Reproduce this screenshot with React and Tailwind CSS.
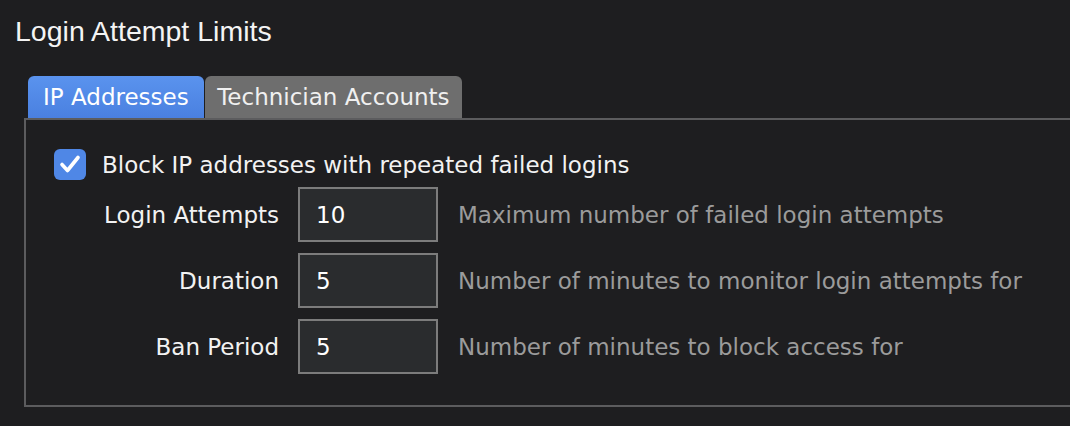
import { useState } from 'react';

const rows = [
  { label: 'Login Attempts', value: '10', hint: 'Maximum number of failed login attempts' },
  { label: 'Duration', value: '5', hint: 'Number of minutes to monitor login attempts for' },
  { label: 'Ban Period', value: '5', hint: 'Number of minutes to block access for' },
];

function App() {
  const [tab, setTab] = useState('ip');
  const [checked, setChecked] = useState(true);

  return (
    <div className="w-[1070px] h-[426px] bg-[#1e1e20] overflow-hidden text-white font-['DejaVu_Sans',sans-serif]">
      <h1 className="pt-[14px] pl-[15px] text-[28.5px] leading-[34px] font-['Liberation_Sans',sans-serif] text-[#f4f4f4]">
        Login Attempt Limits
      </h1>

      <div className="mt-[28px] ml-[24px] w-[1100px]">
        <div className="flex pl-[4px] h-[42px] items-end">
          <button
            onClick={() => setTab('ip')}
            className={`h-[42px] px-[15px] rounded-t-[6px] text-[23px] leading-[42px] ${tab === 'ip' ? 'bg-gradient-to-b from-[#5a93ee] to-[#4a80e0] text-white' : 'bg-[#6e6e6e] text-[#f0f0f0]'}`}
          >
            IP Addresses
          </button>
          <button
            onClick={() => setTab('tech')}
            className={`ml-[1px] h-[42px] px-[12.5px] rounded-t-[6px] text-[23px] leading-[42px] ${tab === 'tech' ? 'bg-gradient-to-b from-[#5a93ee] to-[#4a80e0] text-white' : 'bg-[#6e6e6e] text-[#f0f0f0]'}`}
          >
            Technician Accounts
          </button>
        </div>

        <div className="h-[289px] border-t-2 border-l-2 border-b-2 border-[#5c5c5e] bg-[#1e1e20]">
          <label className="flex items-center mt-[28px] ml-[28px] h-[32px] cursor-pointer">
            <span
              onClick={() => setChecked(!checked)}
              className={`w-[32px] h-[31px] rounded-[6px] flex items-center justify-center ${checked ? 'bg-[#4f87e6]' : 'border-2 border-[#777]'}`}
            >
              {checked && (
                <svg width="22" height="20" viewBox="0 0 22 20" fill="none">
                  <path d="M3 10.5 L8.5 16.5 L19 3.5" stroke="white" strokeWidth="3.6" strokeLinecap="round" strokeLinejoin="round" />
                </svg>
              )}
            </span>
            <span className="ml-[16px] pt-[2px] text-[23px] leading-[32px] text-[#f2f2f2]">Block IP addresses with repeated failed logins</span>
          </label>

          <div className="mt-[7px] flex flex-col gap-[11px]">
            {rows.map((r) => (
              <div key={r.label} className="flex items-center">
                <span className="w-[253px] pt-[2px] text-right text-[23px] text-[#f2f2f2]">{r.label}</span>
                <input
                  defaultValue={r.value}
                  className="ml-[19px] w-[140px] h-[55px] bg-[#2a2c2e] border-2 border-[#7c7c7c] px-[16px] text-[23px] text-white outline-none"
                />
                <span className="ml-[20px] pt-[2px] text-[23px] text-[#9b9b9b] whitespace-nowrap">{r.hint}</span>
              </div>
            ))}
          </div>
        </div>
      </div>
    </div>
  );
}

export default App;
